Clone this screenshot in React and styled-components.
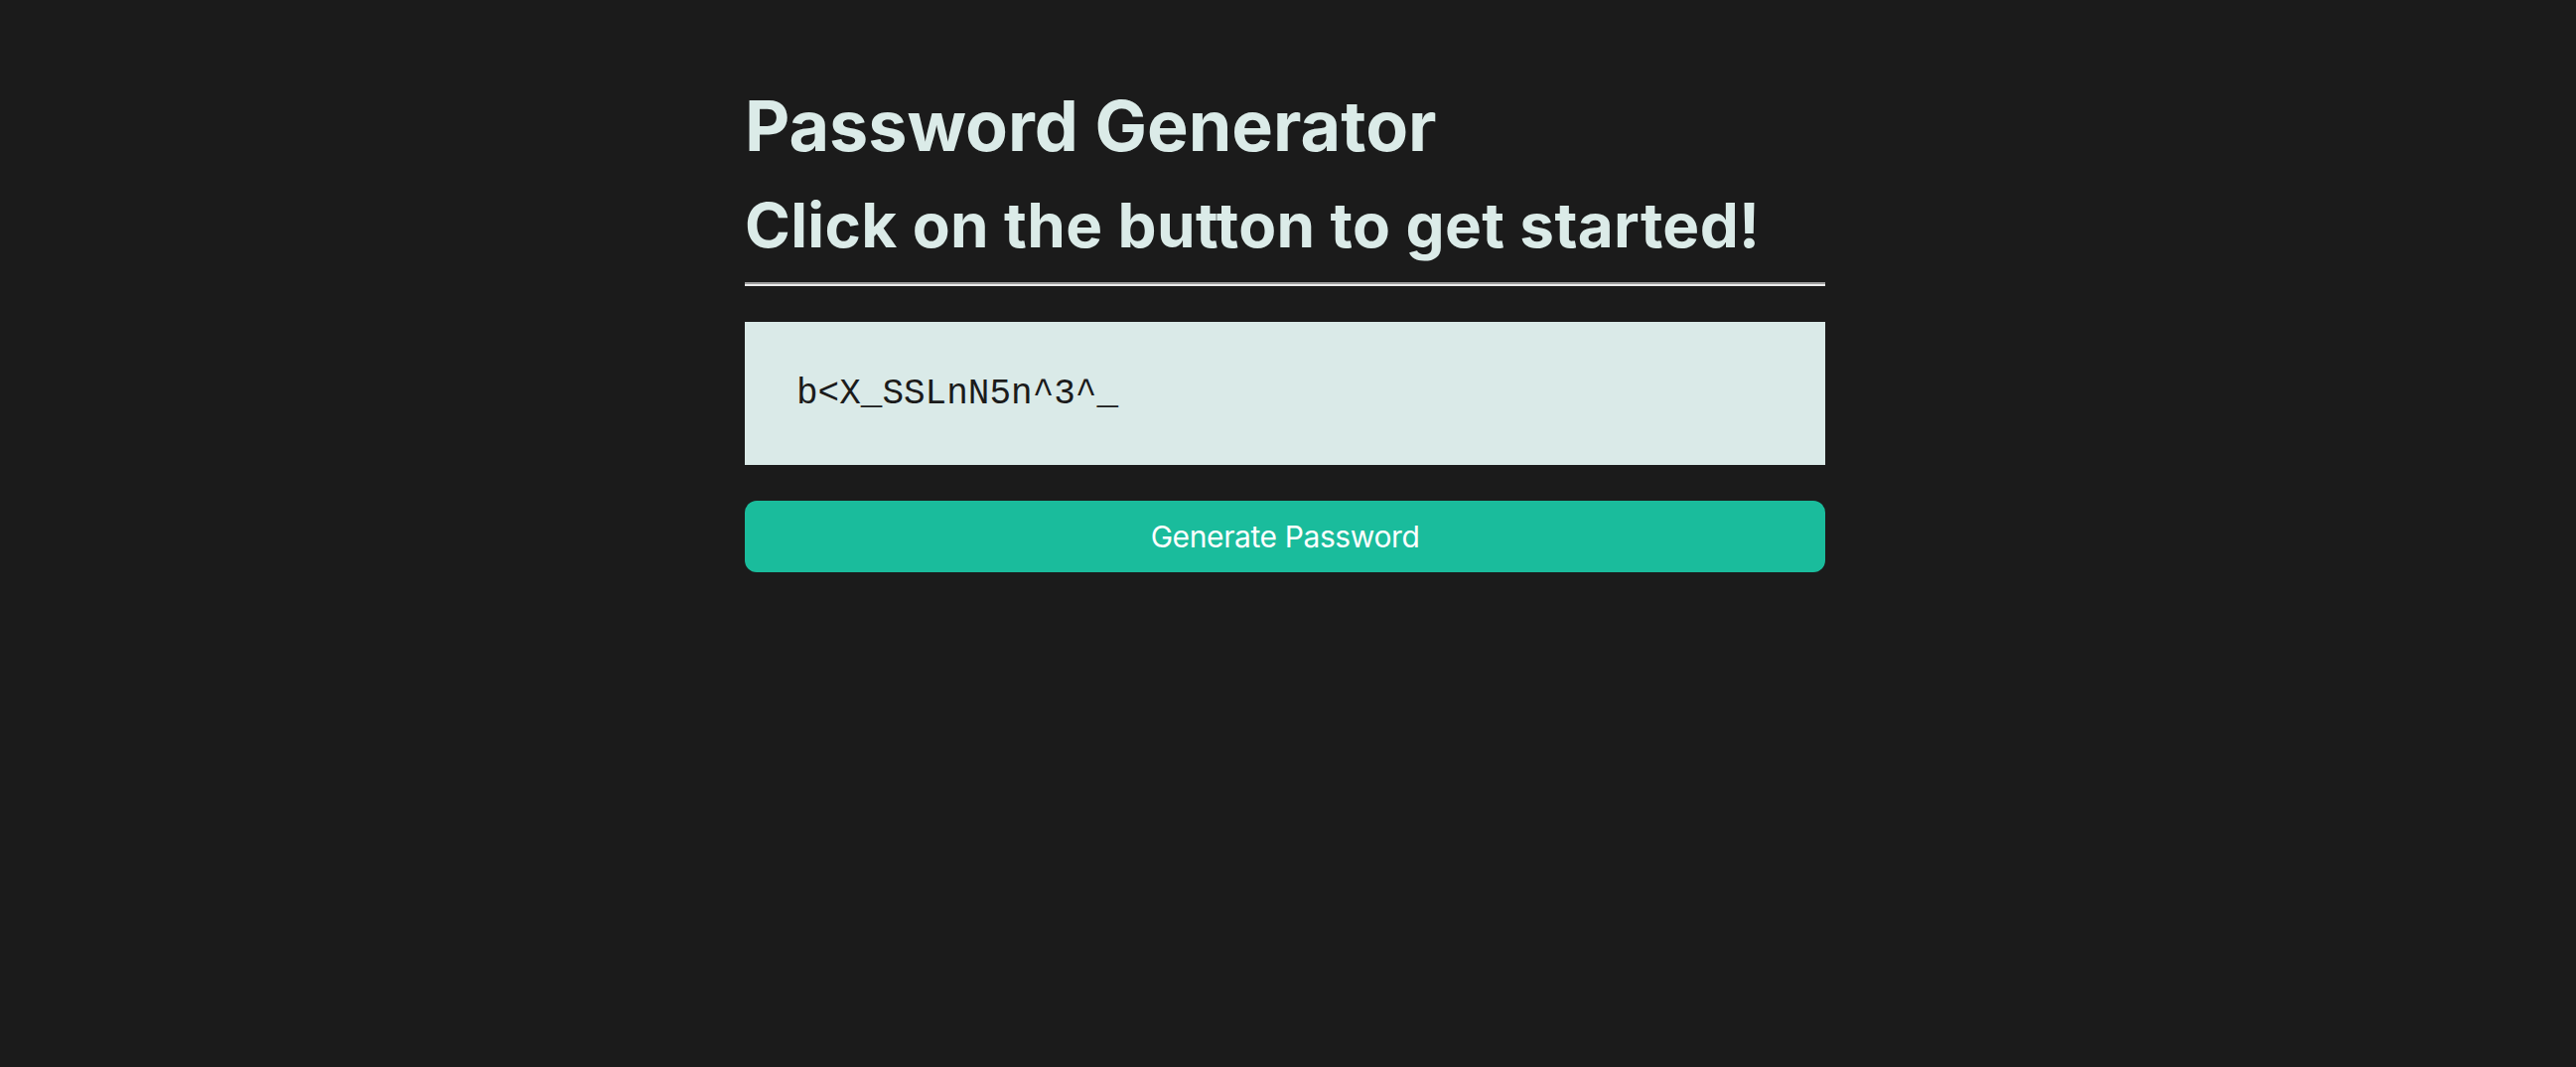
import React, { useState } from 'react'
import styled, { createGlobalStyle } from 'styled-components'

const GlobalStyle = createGlobalStyle`
  html, body {
    margin: 0;
    padding: 0;
    background: #1b1b1b;
  }
  body {
    font-family: Inter, "Noto Sans", sans-serif;
  }
`

const Page = styled.main`
  min-height: 100vh;
  background: #1b1b1b;
  padding: 85px 6px 0 0;
  box-sizing: border-box;
`

const Container = styled.div`
  width: 1088px;
  margin: 0 auto;
  display: flex;
  flex-direction: column;
`

const Title = styled.h1`
  margin: 0;
  font-size: 70px;
  line-height: 84px;
  font-weight: 700;
  color: #dbebe8;
`

const Subtitle = styled.h2`
  margin: 20px 0 0;
  font-size: 62px;
  line-height: 76px;
  font-weight: 700;
  color: #dbebe8;
  letter-spacing: 0.35px;
`

const Divider = styled.hr`
  margin: 19px 0 0;
  height: 0;
  border: none;
  border-top: 2px solid #9e9e9e;
  border-bottom: 2px solid #ececec;
`

const Output = styled.div`
  margin-top: 36px;
  height: 144px;
  background: #daeae8;
  display: flex;
  align-items: center;
  padding: 0 52px;
  font-family: "Liberation Mono", "Courier New", monospace;
  font-size: 36px;
  color: #1b1b1b;
`

const GenerateButton = styled.button`
  margin-top: 36px;
  height: 72px;
  border: none;
  border-radius: 12px;
  background: #1abc9c;
  color: #ffffff;
  font-family: Inter, "Noto Sans", sans-serif;
  font-size: 30px;
  letter-spacing: -0.4px;
  cursor: pointer;
`

const chars = 'abcdefghijklmnopqrstuvwxyzABCDEFGHIJKLMNOPQRSTUVWXYZ0123456789^_<>!@#'

export default function App () {
  const [password, setPassword] = useState('b<X_SSLnN5n^3^_')

  const generate = () => {
    let out = ''
    for (let i = 0; i < 15; i++) out += chars[Math.floor(Math.random() * chars.length)]
    setPassword(out)
  }

  return (
    <Page>
      <GlobalStyle />
      <Container>
        <Title>Password Generator</Title>
        <Subtitle>Click on the button to get started!</Subtitle>
        <Divider />
        <Output>{password}</Output>
        <GenerateButton onClick={generate}>Generate Password</GenerateButton>
      </Container>
    </Page>
  )
}
